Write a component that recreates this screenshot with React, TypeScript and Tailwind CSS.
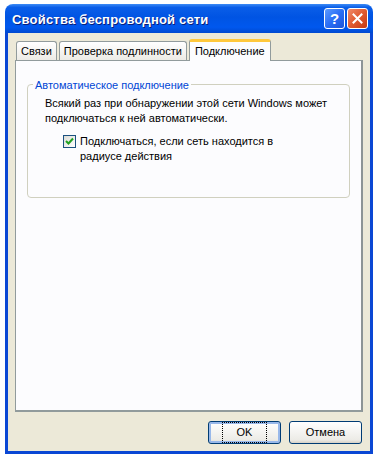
const font = { fontFamily: 'Tahoma, "Liberation Sans", "DejaVu Sans", sans-serif' }

function TitleButton({ kind }: { kind: 'help' | 'close' }) {
  const bg =
    kind === 'help'
      ? 'bg-[linear-gradient(135deg,#5c9bff_0%,#2a6ef5_50%,#1c54d8_100%)]'
      : 'bg-[linear-gradient(135deg,#f08a6a_0%,#e05a30_50%,#c33a12_100%)]'
  return (
    <div
      className={`w-[21px] h-[21px] rounded-[3px] border border-white flex items-center justify-center ${bg}`}
    >
      {kind === 'help' ? (
        <span className="text-white font-bold text-[15px] leading-none" style={{ fontFamily: '"Liberation Sans", sans-serif' }}>
          ?
        </span>
      ) : (
        <svg width="11" height="11" viewBox="0 0 11 11">
          <path d="M1.5 1.5 L9.5 9.5 M9.5 1.5 L1.5 9.5" stroke="white" strokeWidth="2" strokeLinecap="square" />
        </svg>
      )}
    </div>
  )
}

function Tab({ label, active }: { label: string; active?: boolean }) {
  if (active) {
    return (
      <div className="relative -mb-px h-[22px] px-[5px] bg-[#fcfcfe] border border-b-0 border-[#919b9c] rounded-t-[3px] border-t-[3px] border-t-[#ffc83c] flex items-center text-[11px] text-black z-10">
        {label}
      </div>
    )
  }
  return (
    <div className="mt-[3px] h-[19px] px-[4px] bg-[linear-gradient(#ffffff,#ecebe5)] border border-b-0 border-[#919b9c] rounded-t-[3px] flex items-center text-[11px] text-black">
      {label}
    </div>
  )
}

function Button({ label, def }: { label: string; def?: boolean }) {
  return (
    <div
      className={`w-[73px] h-[23px] rounded-[3px] border border-[#003c74] bg-[linear-gradient(#ffffff,#ecebe6_85%,#d6d0c5)] flex items-center justify-center text-[11px] text-black ${
        def ? 'shadow-[inset_0_0_0_2px_#98b8ea]' : ''
      }`}
    >
      {def ? <span className="px-[14px] py-[1px] border border-dotted border-black">{label}</span> : label}
    </div>
  )
}

export default function App() {
  return (
    <div className="w-[377px] h-[459px] bg-white pt-[4px] pl-[5px]" style={font}>
      <div className="w-[368px] h-[450px] flex flex-col">
        {/* заголовок */}
        <div className="h-[29px] rounded-t-[8px] bg-[linear-gradient(#3d8bf5_0%,#0a5ee8_12%,#0054e3_45%,#0058ee_80%,#0049d0_100%)] flex items-center justify-between pl-[7px] pr-[5px] shrink-0">
          <span
            className="text-white font-bold text-[13px] tracking-[0.2px] mt-[2px] [text-shadow:1px_1px_0_#0a1f7a]"
            style={{ fontFamily: '"Trebuchet MS", "Liberation Sans", sans-serif' }}
          >
            Свойства беспроводной сети
          </span>
          <div className="flex gap-[2px]">
            <TitleButton kind="help" />
            <TitleButton kind="close" />
          </div>
        </div>

        {/* тело окна */}
        <div className="flex-1 bg-[#ece9d8] border-x-[3px] border-b-[3px] border-[#0a47d4] flex flex-col px-[7px] pt-[5px]">
          <div className="flex pl-[1px] gap-[2px] items-end">
            <Tab label="Связи" />
            <Tab label="Проверка подлинности" />
            <Tab label="Подключение" active />
          </div>
          <div className="h-[352px] bg-[#fcfcfe] border border-[#919b9c] border-r-[2px] border-b-[2px] border-r-[#8c9496] pt-[23px] px-[11px]">
            <div className="relative h-[114px] border border-[#d0d0bf] rounded-[4px] pt-[11px] pl-[17px]">
              <span className="absolute -top-[8px] left-[5px] bg-[#fcfcfe] px-[2px] text-[11px] text-[#0046d5]">
                Автоматическое подключение
              </span>
              <div className="text-[11px] leading-[15px] text-black">
                Всякий раз при обнаружении этой сети Windows может
                <br />
                подключаться к ней автоматически.
              </div>
              <div className="flex mt-[8px] ml-[18px] gap-[4px]">
                <div className="mt-[1px] w-[13px] h-[13px] border border-[#1c5180] bg-[linear-gradient(135deg,#dcdcd6,#ffffff)] flex items-center justify-center shrink-0">
                  <svg width="9" height="9" viewBox="0 0 9 9">
                    <path d="M1 4 L3.5 6.5 L8 1.5" stroke="#21a121" strokeWidth="2" fill="none" />
                  </svg>
                </div>
                <div className="text-[11px] leading-[15px] text-black">
                  Подключаться, если сеть находится в
                  <br />
                  радиусе действия
                </div>
              </div>
            </div>
          </div>
          <div className="flex justify-end gap-[8px] mt-[9px] pr-[1px]">
            <Button label="OK" def />
            <Button label="Отмена" />
          </div>
        </div>
      </div>
    </div>
  )
}
